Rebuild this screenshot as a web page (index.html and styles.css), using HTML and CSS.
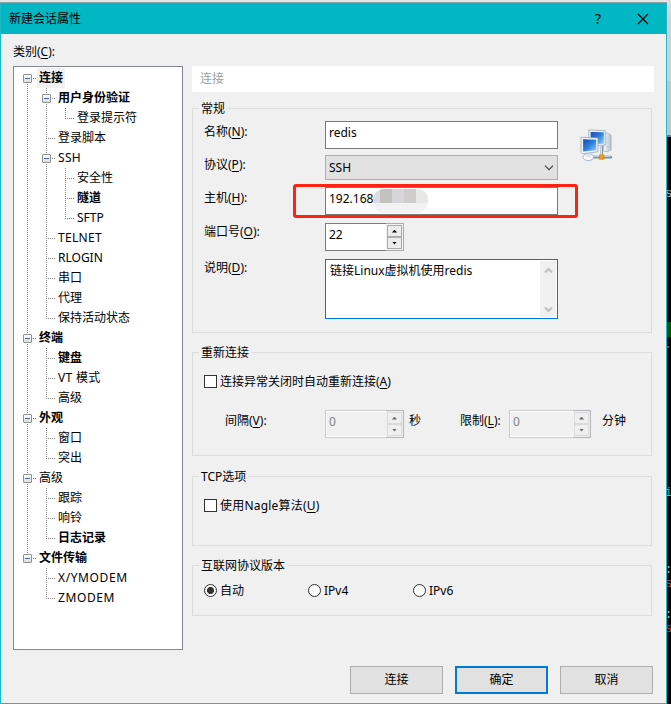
FILE: index.html
```html
<!DOCTYPE html>
<html lang="zh-CN">
<head>
<meta charset="utf-8">
<title>新建会话属性</title>
<link rel="stylesheet" href="styles.css">
</head>
<body>
<div class="desktop">
<main class="dialog">
  <header class="titlebar">
    <h1>新建会话属性</h1>
    <span class="help">?</span>
    <svg class="close" width="12" height="12" viewBox="0 0 12 12"><path d="M1 1l10 10M11 1L1 11" stroke="#000" stroke-width="1.1" fill="none"/></svg>
  </header>
  <div class="category">类别(<u>C</u>):</div>
  <div class="content">
    <ul class="tree">
      <li><i class="down box"></i><b class="sel">连接</b></li>
      <li><i class="v"></i><i class="v box"></i><b>用户身份验证</b></li>
      <li><i class="v"></i><i class="v"></i><i class="l"></i><span>登录提示符</span></li>
      <li><i class="v"></i><i class="t"></i><span>登录脚本</span></li>
      <li><i class="v"></i><i class="v box"></i><span class="s3">SSH</span></li>
      <li><i class="v"></i><i class="v"></i><i class="t"></i><span>安全性</span></li>
      <li><i class="v"></i><i class="v"></i><i class="t"></i><b>隧道</b></li>
      <li><i class="v"></i><i class="v"></i><i class="l"></i><span>SFTP</span></li>
      <li><i class="v"></i><i class="t"></i><span class="s3">TELNET</span></li>
      <li><i class="v"></i><i class="t"></i><span>RLOGIN</span></li>
      <li><i class="v"></i><i class="t"></i><span>串口</span></li>
      <li><i class="v"></i><i class="t"></i><span>代理</span></li>
      <li><i class="v"></i><i class="l"></i><span>保持活动状态</span></li>
      <li><i class="v box"></i><b>终端</b></li>
      <li><i class="v"></i><i class="t"></i><b>键盘</b></li>
      <li><i class="v"></i><i class="t"></i><span class="s3">VT 模式</span></li>
      <li><i class="v"></i><i class="l"></i><span>高级</span></li>
      <li><i class="v box"></i><b>外观</b></li>
      <li><i class="v"></i><i class="t"></i><span>窗口</span></li>
      <li><i class="v"></i><i class="l"></i><span>突出</span></li>
      <li><i class="v box"></i><span>高级</span></li>
      <li><i class="v"></i><i class="t"></i><span>跟踪</span></li>
      <li><i class="v"></i><i class="t"></i><span>响铃</span></li>
      <li><i class="v"></i><i class="l"></i><b>日志记录</b></li>
      <li><i class="l box"></i><b>文件传输</b></li>
      <li><i></i><i class="t"></i><span class="s6">X/YMODEM</span></li>
      <li><i></i><i class="l"></i><span class="s6">ZMODEM</span></li>
    </ul>
    <div class="page">
      <div class="page-title">连接</div>

      <section class="group general">
        <h2>常规</h2>
        <div class="columns">
          <div class="form">
            <div class="row name"><label>名称(<u>N</u>):</label><div class="field">redis</div></div>
            <div class="row proto"><label>协议(<u>P</u>):</label>
              <div class="field combo"><span>SSH</span><svg width="10" height="6" viewBox="0 0 10 6"><path d="M1 .7l4 4 4-4" fill="none" stroke="#444" stroke-width="1.2"/></svg></div></div>
            <div class="row host"><label>主机(<u>H</u>):</label><div class="field">192.168<span class="mosaic"><i></i><i></i><i></i><i></i><i></i></span></div><div class="marker"></div></div>
            <div class="row port"><label>端口号(<u>O</u>):</label>
              <div class="spin"><span>22</span><div class="arrows"><i class="up"></i><i class="dn"></i></div></div></div>
            <div class="row desc"><label>说明(<u>D</u>):</label>
              <div class="area"><span>链接Linux虚拟机使用redis</span>
                <div class="scroll">
                  <svg width="9" height="7" viewBox="0 0 9 7"><path d="M1 5.5l3.5-3.5L8 5.5" fill="none" stroke="#bfbfbf" stroke-width="2"/></svg>
                  <svg width="9" height="7" viewBox="0 0 9 7"><path d="M1 1.5L4.500 5 8 1.500" fill="none" stroke="#bfbfbf" stroke-width="2"/></svg>
                </div></div></div>
          </div>
          <svg class="net" width="33" height="33" viewBox="0 0 34 34">
            <defs><linearGradient id="scr" x1="0" y1="0" x2="1" y2="1"><stop offset="0" stop-color="#1646b4"/><stop offset=".5" stop-color="#2f7fdc"/><stop offset="1" stop-color="#8fd4fa"/></linearGradient>
            <linearGradient id="twr" x1="0" y1="0" x2="1" y2="0"><stop offset="0" stop-color="#fff"/><stop offset="1" stop-color="#b4c0ca"/></linearGradient></defs>
            <path d="M25 5l3-1 4 2.500v15l-4 2-4-1z" fill="url(#twr)" stroke="#94a5b3" stroke-width=".7"/>
            <path d="M28 8v12M30 8v10" stroke="#c3d0da" stroke-width=".7"/>
            <path d="M9 1l17 .6v15L9 17.500z" fill="#edf3f8" stroke="#91a6b8" stroke-width=".8"/>
            <path d="M11 3l13.500.4v11.800L11 15.500z" fill="url(#scr)"/>
            <path d="M22.500 17.500v9" stroke="#8298aa" stroke-width="2.600"/><path d="M22.200 17.500v9" stroke="#dce6ee"/>
            <path d="M14 29h17.500" stroke="#71899c" stroke-width="3" stroke-linecap="round"/><path d="M14 28.500h17.500" stroke="#cbd9e4"/>
            <ellipse cx="8.500" cy="29" rx="5.500" ry="3.500" fill="#f7fafc" stroke="#9aabb9" stroke-width=".9"/>
            <path d="M6.500 24h4.500v5H6.500z" fill="#d7e1e9"/>
            <path d="M1 8.500l17.500.7v14.300L2.500 25.500 1 24z" fill="#eef4f8" stroke="#91a6b8" stroke-width=".8"/>
            <path d="M3.200 10.500l13.500.5v11L3.200 23.300z" fill="url(#scr)"/>
            <rect x="20.300" y="26.700" width="4.400" height="4.400" fill="#ff9a00" stroke="#d77800" stroke-width=".6"/>
          </svg>
        </div>
      </section>

      <section class="group reconnect">
        <h2>重新连接</h2>
        <div class="check"><i class="cb"></i><span>连接异常关闭时自动重新连接(<u>A</u>)</span></div>
        <div class="limits">
          <label class="l1">间隔(<u>V</u>):</label>
          <div class="spin off"><span>0</span><div class="arrows"><i class="up"></i><i class="dn"></i></div></div>
          <label class="l2">秒</label>
          <label class="l3">限制(<u>L</u>):</label>
          <div class="spin off wide"><span>0</span><div class="arrows"><i class="up"></i><i class="dn"></i></div></div>
          <label class="l4">分钟</label>
        </div>
      </section>

      <section class="group tcp">
        <h2>TCP选项</h2>
        <div class="check"><i class="cb"></i><span class="s2">使用Nagle算法(<u>U</u>)</span></div>
      </section>

      <section class="group ipver">
        <h2>互联网协议版本</h2>
        <div class="radios">
          <div class="check"><i class="rb on"></i><span>自动</span></div>
          <div class="check"><i class="rb"></i><span>IPv4</span></div>
          <div class="check"><i class="rb"></i><span>IPv6</span></div>
        </div>
      </section>
    </div>
  </div>
  <footer class="buttons">
    <div class="btn">连接</div>
    <div class="btn primary">确定</div>
    <div class="btn">取消</div>
  </footer>
</main>
<aside class="behind">
  <div class="pale"></div><div class="grey"></div><div class="edge"></div>
  <div class="terminal">
    <span class="g1">s</span><span class="green"></span><span class="dot"></span>
    <span class="teal">i</span><span class="c1">:</span><span class="r1">s</span><span class="c2">:</span><span class="r2">s</span>
  </div>
</aside>
</div>
</body>
</html>
```
FILE: styles.css
```css
*, *::before, *::after { box-sizing: border-box; }
body {
  margin: 0;
  width: 671px;
  height: 704px;
  overflow: hidden;
  background: #e4e4e4;
  color: #000;
  font: 12px/16px "Noto Sans", "Noto Sans CJK SC", sans-serif;
  white-space: nowrap;
}
h1, h2 { margin: 0; font-size: 12px; font-weight: 400; }
u { text-decoration: underline; text-underline-offset: 2px; text-decoration-thickness: 1px; text-decoration-skip-ink: none; }
.s2 { letter-spacing: .2px; }
.s3 { letter-spacing: .3px; }
.s6 { letter-spacing: .6px; }

.desktop { display: flex; height: 704px; }
.dialog {
  width: 667px;
  height: 701px;
  margin-top: 3px;
  border: 1px solid #1cb9c6;
  border-top: 0;
  background: #f0f0f0;
  box-shadow: 0 -1px 0 #8aa5a8;
}
.titlebar {
  display: flex;
  align-items: center;
  height: 31px;
  padding: 0 17px 0 8px;
  background: #00b7c3;
}
.titlebar h1 { flex: 1; }
.help { width: 8px; margin-right: 35px; font-size: 14px; text-align: center; }
.category { height: 32px; padding: 10px 0 0 12px; }
.content { display: flex; gap: 9px; padding-left: 12px; height: 584px; }

/* category tree */
.tree {
  width: 170px;
  height: 584px;
  margin: 0;
  padding: 1px 0 0 4px;
  list-style: none;
  background: #fff;
  border: 1px solid #828790;
}
.tree li { display: flex; height: 20px; }
.tree li > span, .tree li > b { padding: 2px 2px 0; height: 20px; }
.tree .sel { background: #f0f0f0; }
.tree i { position: relative; width: 19px; height: 20px; }
.tree i.v::before, .tree i.t::before, .tree i.l::before, .tree i.down::before {
  content: "";
  position: absolute;
  left: 9px;
  top: 0;
  width: 1px;
  height: 20px;
  background: repeating-linear-gradient(#808080 0 1px, transparent 1px 2px);
}
.tree i.l::before { height: 11px; }
.tree i.down::before { top: 10px; height: 10px; }
.tree i.t::after, .tree i.l::after {
  content: "";
  position: absolute;
  left: 9px;
  top: 10px;
  width: 9px;
  height: 1px;
  background: repeating-linear-gradient(90deg, #808080 0 1px, transparent 1px 2px);
}
.tree i.box { background: repeating-linear-gradient(90deg, #808080 0 1px, transparent 1px 2px) 15px 10px / 4px 1px no-repeat; }
.tree i.box::after {
  content: "";
  position: absolute;
  left: 5px;
  top: 6px;
  width: 9px;
  height: 9px;
  border: 1px solid #919191;
  border-radius: 1px;
  background: linear-gradient(#4b63a7, #4b63a7) 1px 3px / 5px 1px no-repeat, linear-gradient(#fff, #dedede);
}

/* right page */
.page { width: 462px; }
.page-title { height: 26px; padding: 5px 8px; background: #fff; color: #a0a0a0; }
.group { width: 460px; border: 1px solid #dcdcdc; }
.group h2 {
  width: max-content;
  height: 16px;
  margin: -8px 0 0 6px;
  padding: 0 2px;
  background: #f0f0f0;
}
.general { height: 225px; margin-top: 16px; }
.reconnect { height: 104px; margin-top: 19px; }
.tcp { height: 70px; margin-top: 20px; }
.ipver { height: 51px; margin-top: 19px; }

.columns { display: flex; gap: 22px; padding: 4px 0 0 11px; }
.form { width: 354px; }
.net { margin-top: 8px; }
.row { display: flex; position: relative; }
.row label { width: 121px; padding-top: 1px; }
.row.name label, .row.host label { padding-top: 3px; }
.row.proto label { padding-top: 2px; }
.name { height: 34px; }
.proto { height: 32px; }
.host, .port { height: 36px; }
.field {
  display: flex;
  width: 233px;
  height: 28px;
  padding: 3px 3px;
  border: 1px solid #7a7a7a;
  background: #fff;
}
.combo {
  height: 25px;
  align-items: center;
  justify-content: space-between;
  padding: 0 3px;
  border-color: #adadad;
  background: #e1e1e1;
}
.mosaic { display: flex; width: 55px; height: 24px; border-radius: 11px; overflow: hidden; background: #f2f2f3; padding-bottom: 10px; margin-top: -2px; }
.mosaic i { width: 12px; background: #dcdce2; }
.mosaic i:nth-child(1) { width: 7px; }
.mosaic i:nth-child(2) { background: #c3c2bf; }
.mosaic i:nth-child(3) { background: #d5d5da; }
.mosaic i:nth-child(4) { background: #cecdcb; }
.mosaic i:nth-child(5) { background: #e8e8e7; }
.marker {
  position: absolute;
  left: 89px;
  top: -3px;
  width: 285px;
  height: 34px;
  border: 3px solid #ff2213;
  border-radius: 3px;
}
.spin {
  display: flex;
  justify-content: space-between;
  width: 79px;
  height: 28px;
  padding: 3px 0 0 3px;
  border: 1px solid #7a7a7a;
  border-right: 0;
  background: #fff;
}
.arrows {
  display: flex;
  flex-direction: column;
  width: 18px;
  height: 28px;
  margin-top: -4px;
  padding: 1px 1px 1px;
  border: 1px solid #acacac;
  border-left: 0;
  background: #f0f0f0;
}
.arrows i { display: flex; justify-content: center; align-items: center; width: 15px; height: 12px; border: 1px solid #acacac; background: #ececec; }
.arrows i::after { content: ""; width: 5px; height: 3px; background: #000; clip-path: polygon(50% 0, 100% 100%, 0 100%); }
.arrows .dn::after { clip-path: polygon(0 0, 100% 0, 50% 100%); }
.off { border-color: #ccc; background: #f0f0f0; color: #838383; box-shadow: inset 1px 1px #fff, inset 0 -1px #fff; }
.off .arrows { border-color: #b4b4b8; }
.off .arrows i { border-color: #d9d9d9; background: #efefef; }
.off .arrows i::after { background: #666; }
.wide { width: 82px; }
.area { display: flex; justify-content: space-between; width: 233px; height: 60px; padding: 1px 1px 1px 4px; border: 1px solid #0078d7; background: #fff; }
.area > span { padding-top: 2px; }
.scroll { display: flex; flex-direction: column; justify-content: space-between; align-items: center; width: 16px; padding: 6px 0 4px; background: #f0f0f0; }

.check { display: flex; align-items: flex-start; gap: 3px; height: 16px; }
.reconnect .check { margin: 13px 0 0 11px; }
.tcp .check { margin: 13px 0 0 11px; }
.cb, .rb { width: 13px; height: 13px; margin-top: 1px; border: 1px solid #333; background: #fff; }
.rb { border-radius: 50%; }
.rb.on { background: radial-gradient(circle, #333 3.200px, #fff 3.900px); }
.limits { display: flex; padding: 20px 0 0 32px; }
.limits label { padding-top: 3px; }
.l1 { width: 100px; }
.l2 { width: 56px; padding-left: 5px; }
.l3 { width: 49px; }
.l4 { padding-left: 11px; }
.radios { display: flex; padding: 9px 0 0 11px; }
.radios .check { width: 105px; }
.radios .check:first-child { width: 104px; }

.buttons { display: flex; gap: 12px; padding: 16px 0 0 349px; }
.btn { width: 93px; height: 28px; padding-top: 5px; text-align: center; background: #e1e1e1; border: 1px solid #adadad; }
.primary { padding-top: 4px; border: 2px solid #0078d7; }

/* windows showing at the right of the dialog */
.behind { width: 4px; height: 704px; overflow: hidden; }
.pale { height: 81px; background: linear-gradient(#dedede, #d2d0d2 20px); }
.grey { height: 54px; background: #c6c3c6; }
.edge { height: 2px; background: #747b96; }
.terminal { position: relative; height: 567px; background: #000; font: 12px/14px "Liberation Mono", monospace; }
.terminal span { position: absolute; left: -2px; }
.g1 { top: 50px; color: #bbb; }
.green { top: 185px; width: 6px; height: 15px; background: #005500; }
.dot { top: 209px; width: 4px; height: 2px; background: #b04030; }
.teal { top: 349px; color: #45c997; }
.c1, .c2 { color: #c9b48d; }
.r1, .r2 { color: #d04545; }
.c1 { top: 426px; }
.r1 { top: 440px; }
.c2 { top: 471px; }
.r2 { top: 485px; }
```
